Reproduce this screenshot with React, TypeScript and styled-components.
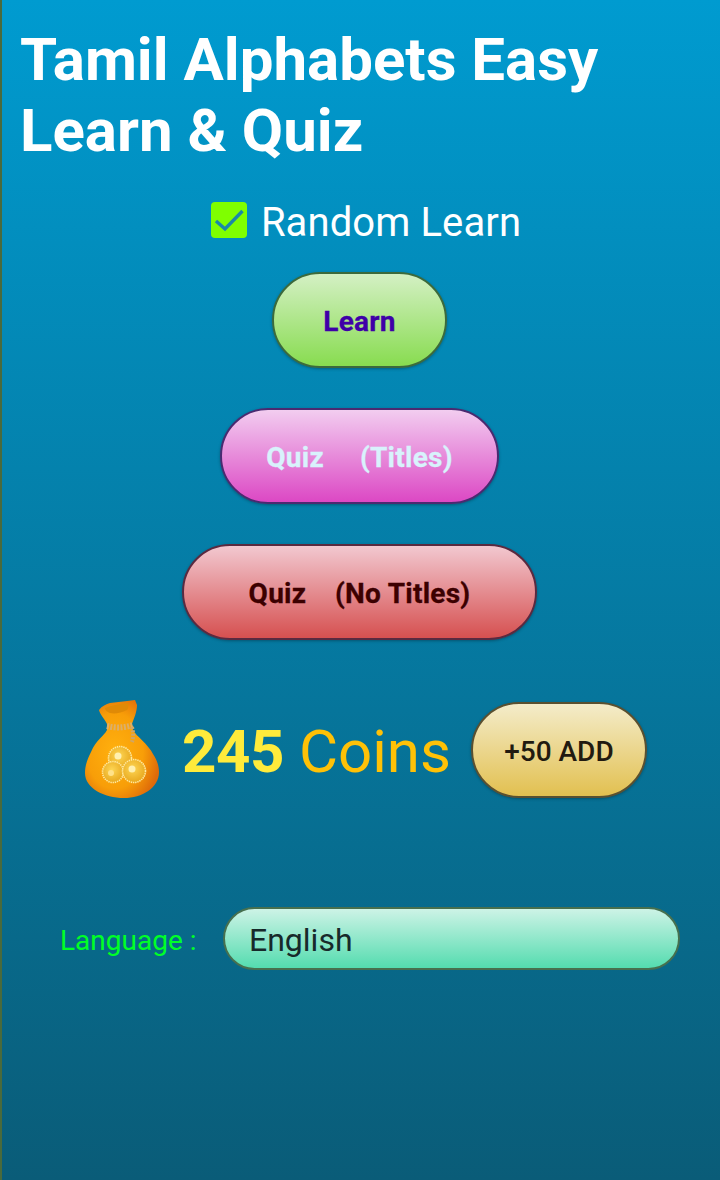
import styled, { createGlobalStyle } from "styled-components";

const GlobalStyle = createGlobalStyle`
  html, body {
    margin: 0;
    padding: 0;
  }
  body {
    font-family: Roboto, "Liberation Sans", sans-serif;
  }
`;

const Page = styled.div`
  box-sizing: border-box;
  width: 720px;
  height: 1180px;
  overflow: hidden;
  border-left: 2px solid #4a6a3c;
  background: linear-gradient(180deg, #009bd0 0%, #0a5c78 100%);
  display: flex;
  flex-direction: column;
`;

const Title = styled.h1`
  margin: 0;
  padding: 24px 0 0 18px;
  font-size: 60px;
  line-height: 71px;
  font-weight: 700;
  color: #ffffff;
`;

const RandomRow = styled.label`
  margin-top: 24px;
  padding-left: 10px;
  display: flex;
  justify-content: center;
  align-items: center;
  gap: 14px;
  height: 60px;
  font-size: 40px;
  color: #ffffff;
`;

const RandomText = styled.span`
  padding-top: 4px;
  letter-spacing: 0.1px;
`;

const CheckBox = styled.span`
  width: 36px;
  height: 36px;
  border-radius: 4px;
  background: #7fff00;
  display: flex;
  align-items: center;
  justify-content: center;
`;

const Actions = styled.div`
  margin-top: 22px;
  padding-right: 3px;
  display: flex;
  flex-direction: column;
  align-items: center;
  gap: 40px;
`;

const Pill = styled.button<{ $top: string; $bottom: string; $edge: string; $ink: string; $w: number }>`
  box-sizing: border-box;
  width: ${(p) => p.$w}px;
  height: 96px;
  border: 2px solid ${(p) => p.$edge};
  border-radius: 48px;
  background: linear-gradient(180deg, ${(p) => p.$top}, ${(p) => p.$bottom});
  box-shadow: 0 1px 3px rgba(0, 0, 0, 0.3);
  color: ${(p) => p.$ink};
  font-family: inherit;
  font-size: 28px;
  font-weight: 700;
  letter-spacing: 0.25px;
  -webkit-text-stroke: 0.3px currentColor;
  white-space: pre;
  padding: 2px 0 0;
`;

const CoinRow = styled.div`
  margin-top: 60px;
  padding-left: 80px;
  display: flex;
  align-items: center;
  height: 100px;
`;

const Count = styled.span`
  margin-left: 20px;
  padding-top: 2px;
  font-size: 60px;
  color: #ffc107;
  b {
    font-weight: 700;
    color: #ffeb3b;
    letter-spacing: -0.4px;
  }
`;

const AddButton = styled(Pill)`
  margin-left: 20px;
  font-weight: 500;
  letter-spacing: 0;
  -webkit-text-stroke: 0;
`;

const LanguageRow = styled.div`
  margin-top: 107px;
  padding-left: 58px;
  display: flex;
  align-items: center;
`;

const LanguageLabel = styled.span`
  width: 163px;
  padding-top: 4px;
  font-size: 28px;
  color: #00ff26;
`;

const Select = styled.div`
  box-sizing: border-box;
  width: 457px;
  height: 63px;
  padding: 2px 0 0 24px;
  border: 2px solid #47704f;
  border-radius: 32px;
  background: linear-gradient(180deg, #cdf3e6, #54dcaf);
  display: flex;
  align-items: center;
  font-size: 32px;
  color: #17292a;
`;

const MoneyBag = () => (
  <svg width="80" height="100" viewBox="0 0 80 100">
    <defs>
      <radialGradient id="bagFill" cx="0.4" cy="0.52" r="0.62">
        <stop offset="0" stopColor="#ffb00e" />
        <stop offset="0.62" stopColor="#f89e08" />
        <stop offset="1" stopColor="#de6a0a" />
      </radialGradient>
      <radialGradient id="coinFill" cx="0.45" cy="0.4" r="0.6">
        <stop offset="0" stopColor="#fdd655" />
        <stop offset="1" stopColor="#e8a81e" />
      </radialGradient>
    </defs>
    <path
      d="M17 10 C20 6 24 4 28 3 C36 2 46 1 53 0 L55 5 C55 12 52 18 50 24 L51 30 C54 36 66 44 71 54 C75 60 77 66 77 72 C77 88 60 98 42 98 C22 98 3 88 3 73 C3 66 5 60 9 52 C14 40 22 36 25 30 L25 24 C23 19 18 15 17 10 Z"
      fill="url(#bagFill)"
    />
    <path d="M23 8 C30 5 39 4 46 3 C47 6 46 9 45 10 C39 13 33 14 28 13 C25 12 23 10 23 8 Z" fill="#e08a06" />
    <path d="M25 26 C33 28 42 28 51 25" fill="none" stroke="#dcae68" strokeWidth="6" strokeDasharray="2 1.4" />
    <path d="M50 27 C51 32 52 36 50 42" fill="none" stroke="#cfa668" strokeWidth="4" strokeDasharray="2 1.4" />
    <g stroke="#ffe9a0" strokeWidth="1.6" strokeDasharray="1.4 0.8" fill="url(#coinFill)">
      <circle cx="38" cy="58" r="11.5" />
      <circle cx="31" cy="72" r="10.5" />
      <circle cx="52" cy="71" r="11.5" />
    </g>
    <circle cx="36" cy="56" r="3.5" fill="#fff0b0" />
    <circle cx="29" cy="73" r="3" fill="#ffe28a" />
    <circle cx="50" cy="69" r="3.5" fill="#fff0b0" />
  </svg>
);

export default function App() {
  return (
    <Page>
      <GlobalStyle />
      <Title>
        Tamil Alphabets Easy
        <br />
        Learn &amp; Quiz
      </Title>
      <RandomRow>
        <CheckBox>
          <svg width="36" height="36" viewBox="0 0 36 36">
            <path d="M5 19 L14 27 L31.5 9" fill="none" stroke="#1a88a8" strokeWidth="3.4" />
          </svg>
        </CheckBox>
        <RandomText>Random Learn</RandomText>
      </RandomRow>
      <Actions>
        <Pill $w={175} $top="#d4f0c4" $bottom="#88dc50" $edge="#3c6a3c" $ink="#3f00a8">
          Learn
        </Pill>
        <Pill $w={279} $top="#f2cdf0" $bottom="#dc48c4" $edge="#4a2a70" $ink="#d8f2fc">
          {"Quiz     (Titles)"}
        </Pill>
        <Pill $w={355} $top="#f2c8d0" $bottom="#d65050" $edge="#5a2a40" $ink="#3c0000">
          {"Quiz    (No Titles)"}
        </Pill>
      </Actions>
      <CoinRow>
        <MoneyBag />
        <Count>
          <b>245</b> Coins
        </Count>
        <AddButton $w={176} $top="#f4ecca" $bottom="#e2c050" $edge="#5a5030" $ink="#221a10">
          +50 ADD
        </AddButton>
      </CoinRow>
      <LanguageRow>
        <LanguageLabel>Language :</LanguageLabel>
        <Select>English</Select>
      </LanguageRow>
    </Page>
  );
}
